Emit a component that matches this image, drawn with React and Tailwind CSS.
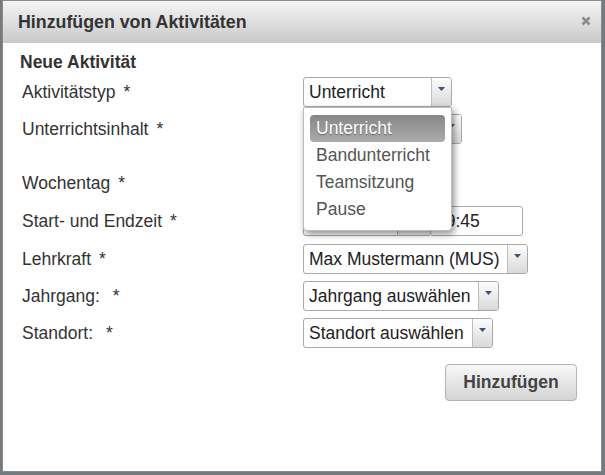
import { useState } from "react";

const font = { fontFamily: '"Liberation Sans", Arial, sans-serif' };

function Arrow() {
  return (
    <div className="w-[20px] shrink-0 border-l border-[#bdbdbd] bg-gradient-to-b from-[#fdfdfd] to-[#d9d9d9] flex justify-center pt-[9px]">
      <svg width="7" height="4" viewBox="0 0 7 4">
        <path d="M0 0 L7 0 L3.5 4 Z" fill="#3b5470" />
      </svg>
    </div>
  );
}

function SelectBox({ value, width, children }) {
  return (
    <div className={`relative ${width} h-[30px]`}>
      <div className="flex h-full border border-[#a9a9a9] rounded-[3px] bg-white overflow-hidden">
        <div className="flex-1 pl-[5px] flex items-center text-[17.5px] text-[#222] whitespace-nowrap overflow-hidden">
          {value}
        </div>
        <Arrow />
      </div>
      {children}
    </div>
  );
}

function Label({ text, gap = "ml-[8px]" }) {
  return (
    <div className="w-[283px] shrink-0 pl-[2px] text-[17.5px] text-[#333] whitespace-nowrap">
      {text}
      <span className={gap}>*</span>
    </div>
  );
}

const options = ["Unterricht", "Bandunterricht", "Teamsitzung", "Pause"];

function Dropdown({ selected }) {
  return (
    <div className="absolute left-0 top-full z-10 w-[149px] bg-white border border-[#bcbcbc] rounded-b-[4px] shadow-[2px_3px_7px_rgba(0,0,0,0.45)] pt-[7px] pb-[7px] px-[6px]">
      {options.map((o) => (
        <div
          key={o}
          className={`h-[27px] flex items-center pl-[6px] text-[17.5px] rounded-[4px] ${
            o === selected
              ? "bg-gradient-to-b from-[#878787] to-[#ababab] text-white [text-shadow:0_1px_1px_rgba(0,0,0,0.35)]"
              : "text-[#555]"
          }`}
        >
          {o}
        </div>
      ))}
    </div>
  );
}

export default function App() {
  const [type] = useState("Unterricht");

  return (
    <div className="w-[605px] h-[475px] bg-[#737a80] overflow-hidden" style={font}>
      <div className="ml-[2px] w-[600px] h-[472px] bg-white border border-[#8a8a8a] flex flex-col">
        <div className="h-[42px] shrink-0 bg-gradient-to-b from-[#f5f5f5] to-[#c9c9c9] flex items-center justify-between pl-[15px] pr-[10px]">
          <h3 className="text-[17.8px] font-bold text-[#333]">Hinzufügen von Aktivitäten</h3>
          <svg width="10" height="10" viewBox="0 0 10 10" className="mb-[3px]">
            <path d="M1.5 1.5 L8.5 8.5 M8.5 1.5 L1.5 8.5" stroke="#8c8c8c" strokeWidth="2.6" />
          </svg>
        </div>

        <div className="flex-1 flex flex-col pl-[17px]">
          <h4 className="mt-[9px] h-[20px] leading-[20px] text-[17.5px] font-bold text-[#333]">Neue Aktivität</h4>

          <div className="mt-[5px] flex items-center">
            <Label text="Aktivitätstyp" />
            <SelectBox value={type} width="w-[149px]">
              <Dropdown selected={type} />
            </SelectBox>
          </div>

          <div className="mt-[7px] flex items-center">
            <Label text="Unterrichtsinhalt" />
            <SelectBox value="" width="w-[159px]" />
          </div>

          <div className="mt-[24px] flex items-center">
            <Label text="Wochentag" />
            <SelectBox value="" width="w-[140px]" />
          </div>

          <div className="mt-[8px] flex items-center">
            <Label text="Start- und Endzeit" />
            <div className="flex h-[30px]">
              <div className="w-[95px] border border-[#a9a9a9] rounded-l-[3px] bg-white" />
              <div className="w-[32px] border-y border-[#a9a9a9] bg-[#eee]" />
              <div className="w-[93px] border border-[#a9a9a9] rounded-[3px] pl-[5px] flex items-center text-[17.5px] text-[#222]">09:45</div>
            </div>
          </div>

          <div className="mt-[8px] flex items-center">
            <Label text="Lehrkraft" />
            <SelectBox value="Max Mustermann (MUS)" width="w-[225px]" />
          </div>

          <div className="mt-[7px] flex items-center">
            <Label text="Jahrgang:" gap="ml-[13px]" />
            <SelectBox value="Jahrgang auswählen" width="w-[196px]" />
          </div>

          <div className="mt-[7px] flex items-center">
            <Label text="Standort:" gap="ml-[13px]" />
            <SelectBox value="Standort auswählen" width="w-[190px]" />
          </div>

          <button className="mt-[16px] self-end mr-[24px] w-[132px] h-[37px] border border-[#b3b3b3] rounded-[4px] bg-gradient-to-b from-[#f8f8f8] to-[#d4d4d4] text-[17.5px] font-bold text-[#444]">
            Hinzufügen
          </button>
        </div>
      </div>
    </div>
  );
}
